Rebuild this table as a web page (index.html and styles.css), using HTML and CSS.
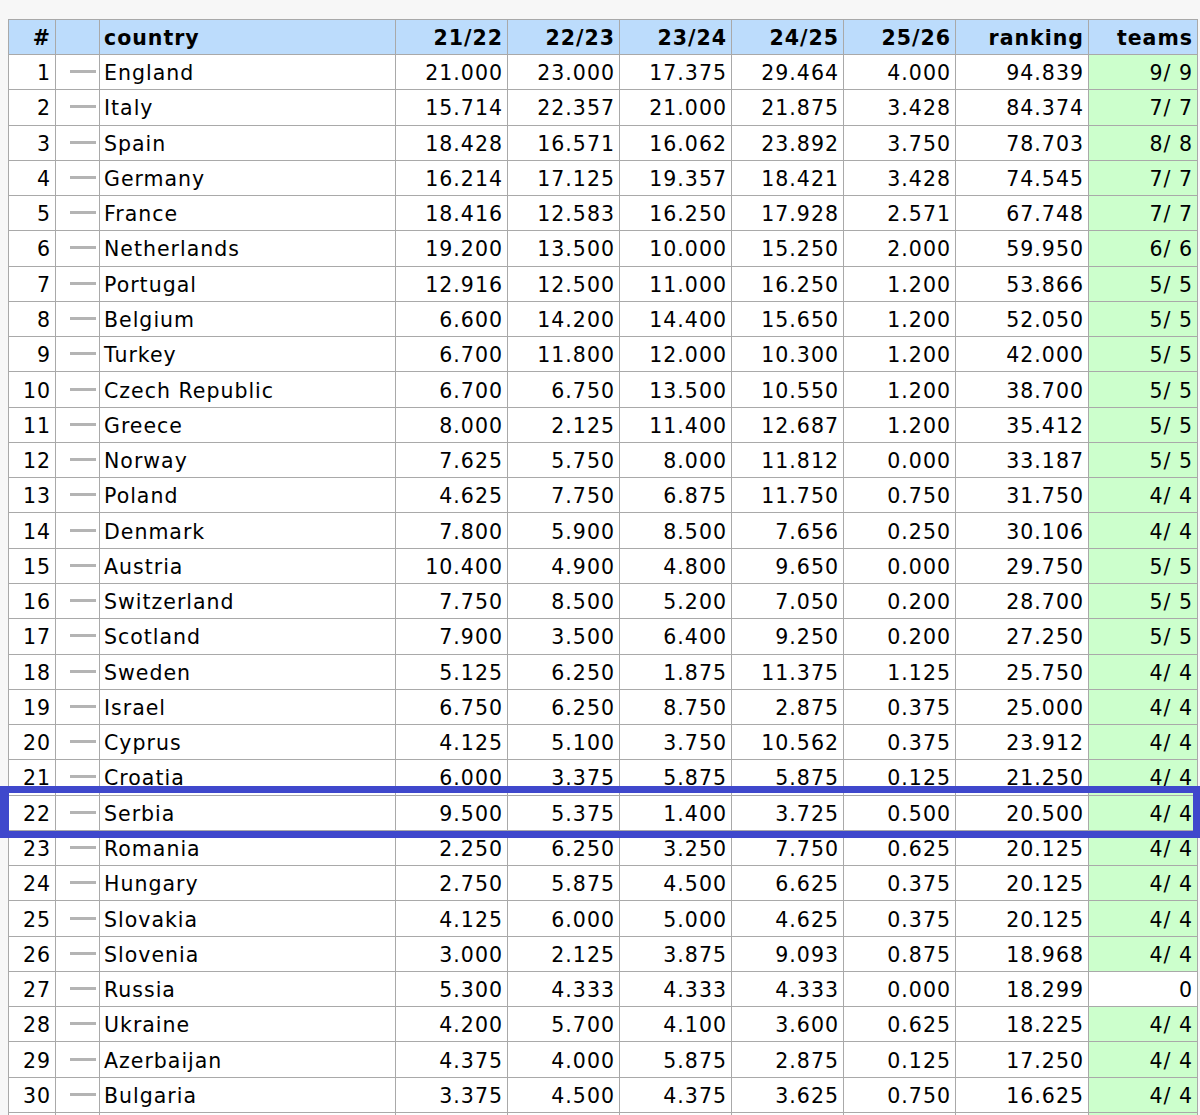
FILE: index.html
```html
<!DOCTYPE html>
<html>
<head>
<meta charset="utf-8">
<link rel="stylesheet" href="styles.css">
</head>
<body>
<div class="page">
<table class="ranking">
<colgroup>
<col class="c-pos"><col class="c-move"><col class="c-country">
<col class="c-season"><col class="c-season"><col class="c-season"><col class="c-season"><col class="c-season">
<col class="c-rank"><col class="c-teams">
</colgroup>
<thead>
<tr><th class="num">#</th><th></th><th class="txt">country</th><th class="num">21/22</th><th class="num">22/23</th><th class="num">23/24</th><th class="num">24/25</th><th class="num">25/26</th><th class="num">ranking</th><th class="num">teams</th></tr>
</thead>
<tbody>
<tr><td class="num">1</td><td class="mv"><span class="dash"></span></td><td class="txt">England</td><td class="num">21.000</td><td class="num">23.000</td><td class="num">17.375</td><td class="num">29.464</td><td class="num">4.000</td><td class="num">94.839</td><td class="num ok">9/ 9</td></tr>
<tr><td class="num">2</td><td class="mv"><span class="dash"></span></td><td class="txt">Italy</td><td class="num">15.714</td><td class="num">22.357</td><td class="num">21.000</td><td class="num">21.875</td><td class="num">3.428</td><td class="num">84.374</td><td class="num ok">7/ 7</td></tr>
<tr><td class="num">3</td><td class="mv"><span class="dash"></span></td><td class="txt">Spain</td><td class="num">18.428</td><td class="num">16.571</td><td class="num">16.062</td><td class="num">23.892</td><td class="num">3.750</td><td class="num">78.703</td><td class="num ok">8/ 8</td></tr>
<tr><td class="num">4</td><td class="mv"><span class="dash"></span></td><td class="txt">Germany</td><td class="num">16.214</td><td class="num">17.125</td><td class="num">19.357</td><td class="num">18.421</td><td class="num">3.428</td><td class="num">74.545</td><td class="num ok">7/ 7</td></tr>
<tr><td class="num">5</td><td class="mv"><span class="dash"></span></td><td class="txt">France</td><td class="num">18.416</td><td class="num">12.583</td><td class="num">16.250</td><td class="num">17.928</td><td class="num">2.571</td><td class="num">67.748</td><td class="num ok">7/ 7</td></tr>
<tr><td class="num">6</td><td class="mv"><span class="dash"></span></td><td class="txt">Netherlands</td><td class="num">19.200</td><td class="num">13.500</td><td class="num">10.000</td><td class="num">15.250</td><td class="num">2.000</td><td class="num">59.950</td><td class="num ok">6/ 6</td></tr>
<tr><td class="num">7</td><td class="mv"><span class="dash"></span></td><td class="txt">Portugal</td><td class="num">12.916</td><td class="num">12.500</td><td class="num">11.000</td><td class="num">16.250</td><td class="num">1.200</td><td class="num">53.866</td><td class="num ok">5/ 5</td></tr>
<tr><td class="num">8</td><td class="mv"><span class="dash"></span></td><td class="txt">Belgium</td><td class="num">6.600</td><td class="num">14.200</td><td class="num">14.400</td><td class="num">15.650</td><td class="num">1.200</td><td class="num">52.050</td><td class="num ok">5/ 5</td></tr>
<tr><td class="num">9</td><td class="mv"><span class="dash"></span></td><td class="txt">Turkey</td><td class="num">6.700</td><td class="num">11.800</td><td class="num">12.000</td><td class="num">10.300</td><td class="num">1.200</td><td class="num">42.000</td><td class="num ok">5/ 5</td></tr>
<tr><td class="num">10</td><td class="mv"><span class="dash"></span></td><td class="txt">Czech Republic</td><td class="num">6.700</td><td class="num">6.750</td><td class="num">13.500</td><td class="num">10.550</td><td class="num">1.200</td><td class="num">38.700</td><td class="num ok">5/ 5</td></tr>
<tr><td class="num">11</td><td class="mv"><span class="dash"></span></td><td class="txt">Greece</td><td class="num">8.000</td><td class="num">2.125</td><td class="num">11.400</td><td class="num">12.687</td><td class="num">1.200</td><td class="num">35.412</td><td class="num ok">5/ 5</td></tr>
<tr><td class="num">12</td><td class="mv"><span class="dash"></span></td><td class="txt">Norway</td><td class="num">7.625</td><td class="num">5.750</td><td class="num">8.000</td><td class="num">11.812</td><td class="num">0.000</td><td class="num">33.187</td><td class="num ok">5/ 5</td></tr>
<tr><td class="num">13</td><td class="mv"><span class="dash"></span></td><td class="txt">Poland</td><td class="num">4.625</td><td class="num">7.750</td><td class="num">6.875</td><td class="num">11.750</td><td class="num">0.750</td><td class="num">31.750</td><td class="num ok">4/ 4</td></tr>
<tr><td class="num">14</td><td class="mv"><span class="dash"></span></td><td class="txt">Denmark</td><td class="num">7.800</td><td class="num">5.900</td><td class="num">8.500</td><td class="num">7.656</td><td class="num">0.250</td><td class="num">30.106</td><td class="num ok">4/ 4</td></tr>
<tr><td class="num">15</td><td class="mv"><span class="dash"></span></td><td class="txt">Austria</td><td class="num">10.400</td><td class="num">4.900</td><td class="num">4.800</td><td class="num">9.650</td><td class="num">0.000</td><td class="num">29.750</td><td class="num ok">5/ 5</td></tr>
<tr><td class="num">16</td><td class="mv"><span class="dash"></span></td><td class="txt">Switzerland</td><td class="num">7.750</td><td class="num">8.500</td><td class="num">5.200</td><td class="num">7.050</td><td class="num">0.200</td><td class="num">28.700</td><td class="num ok">5/ 5</td></tr>
<tr><td class="num">17</td><td class="mv"><span class="dash"></span></td><td class="txt">Scotland</td><td class="num">7.900</td><td class="num">3.500</td><td class="num">6.400</td><td class="num">9.250</td><td class="num">0.200</td><td class="num">27.250</td><td class="num ok">5/ 5</td></tr>
<tr><td class="num">18</td><td class="mv"><span class="dash"></span></td><td class="txt">Sweden</td><td class="num">5.125</td><td class="num">6.250</td><td class="num">1.875</td><td class="num">11.375</td><td class="num">1.125</td><td class="num">25.750</td><td class="num ok">4/ 4</td></tr>
<tr><td class="num">19</td><td class="mv"><span class="dash"></span></td><td class="txt">Israel</td><td class="num">6.750</td><td class="num">6.250</td><td class="num">8.750</td><td class="num">2.875</td><td class="num">0.375</td><td class="num">25.000</td><td class="num ok">4/ 4</td></tr>
<tr><td class="num">20</td><td class="mv"><span class="dash"></span></td><td class="txt">Cyprus</td><td class="num">4.125</td><td class="num">5.100</td><td class="num">3.750</td><td class="num">10.562</td><td class="num">0.375</td><td class="num">23.912</td><td class="num ok">4/ 4</td></tr>
<tr><td class="num">21</td><td class="mv"><span class="dash"></span></td><td class="txt">Croatia</td><td class="num">6.000</td><td class="num">3.375</td><td class="num">5.875</td><td class="num">5.875</td><td class="num">0.125</td><td class="num">21.250</td><td class="num ok">4/ 4</td></tr>
<tr><td class="num">22</td><td class="mv"><span class="dash"></span></td><td class="txt">Serbia</td><td class="num">9.500</td><td class="num">5.375</td><td class="num">1.400</td><td class="num">3.725</td><td class="num">0.500</td><td class="num">20.500</td><td class="num ok">4/ 4</td></tr>
<tr><td class="num">23</td><td class="mv"><span class="dash"></span></td><td class="txt">Romania</td><td class="num">2.250</td><td class="num">6.250</td><td class="num">3.250</td><td class="num">7.750</td><td class="num">0.625</td><td class="num">20.125</td><td class="num ok">4/ 4</td></tr>
<tr><td class="num">24</td><td class="mv"><span class="dash"></span></td><td class="txt">Hungary</td><td class="num">2.750</td><td class="num">5.875</td><td class="num">4.500</td><td class="num">6.625</td><td class="num">0.375</td><td class="num">20.125</td><td class="num ok">4/ 4</td></tr>
<tr><td class="num">25</td><td class="mv"><span class="dash"></span></td><td class="txt">Slovakia</td><td class="num">4.125</td><td class="num">6.000</td><td class="num">5.000</td><td class="num">4.625</td><td class="num">0.375</td><td class="num">20.125</td><td class="num ok">4/ 4</td></tr>
<tr><td class="num">26</td><td class="mv"><span class="dash"></span></td><td class="txt">Slovenia</td><td class="num">3.000</td><td class="num">2.125</td><td class="num">3.875</td><td class="num">9.093</td><td class="num">0.875</td><td class="num">18.968</td><td class="num ok">4/ 4</td></tr>
<tr><td class="num">27</td><td class="mv"><span class="dash"></span></td><td class="txt">Russia</td><td class="num">5.300</td><td class="num">4.333</td><td class="num">4.333</td><td class="num">4.333</td><td class="num">0.000</td><td class="num">18.299</td><td class="num">0</td></tr>
<tr><td class="num">28</td><td class="mv"><span class="dash"></span></td><td class="txt">Ukraine</td><td class="num">4.200</td><td class="num">5.700</td><td class="num">4.100</td><td class="num">3.600</td><td class="num">0.625</td><td class="num">18.225</td><td class="num ok">4/ 4</td></tr>
<tr><td class="num">29</td><td class="mv"><span class="dash"></span></td><td class="txt">Azerbaijan</td><td class="num">4.375</td><td class="num">4.000</td><td class="num">5.875</td><td class="num">2.875</td><td class="num">0.125</td><td class="num">17.250</td><td class="num ok">4/ 4</td></tr>
<tr><td class="num">30</td><td class="mv"><span class="dash"></span></td><td class="txt">Bulgaria</td><td class="num">3.375</td><td class="num">4.500</td><td class="num">4.375</td><td class="num">3.625</td><td class="num">0.750</td><td class="num">16.625</td><td class="num ok">4/ 4</td></tr>
<tr class="cut"><td></td><td></td><td></td><td></td><td></td><td></td><td></td><td></td><td></td><td class="ok"></td></tr>
</tbody>
</table>
<div class="mark"></div>
</div>
</body>
</html>
```

FILE: styles.css
```css
html, body {
  margin: 0;
  padding: 0;
  background: #f7f7f7;
  overflow: hidden;
}
.page {
  position: relative;
  padding: 19px 0 0 8px;
  height: 1096px;
  overflow: hidden;
}
.ranking {
  border-collapse: collapse;
  table-layout: fixed;
  width: 1189px;
  font-family: "DejaVu Sans", Verdana, sans-serif;
  font-size: 20.5px;
  letter-spacing: 1px;
  color: #000;
  background: #fff;
}
.c-pos { width: 47px; }
.c-move { width: 44px; }
.c-country { width: 296px; }
.c-season { width: 112px; }
.c-rank { width: 133px; }
.c-teams { width: 109px; }
.ranking th, .ranking td {
  border: 1px solid #a9a9a9;
  padding: 2px 4px 0 4px;
  height: 32.28px;
  white-space: pre;
  overflow: hidden;
}
.ranking th {
  background: #bcdcfc;
  font-weight: bold;
  height: 32px;
}
.ranking .num { text-align: right; }
.ranking .txt { text-align: left; }
.ranking .mv { text-align: right; padding-right: 3px; }
.dash {
  display: inline-block;
  width: 26px;
  height: 3px;
  background: #b4b4b4;
  vertical-align: middle;
  margin-bottom: 5px;
}
.ranking td.ok { background: #ccffcc; }
.ranking tr.cut td { height: 20px; }
.mark {
  position: absolute;
  left: 0;
  top: 786px;
  width: 1200px;
  height: 52px;
  box-sizing: border-box;
  border: 7px solid #3f48cc;
  border-left-width: 9px;
}
```
